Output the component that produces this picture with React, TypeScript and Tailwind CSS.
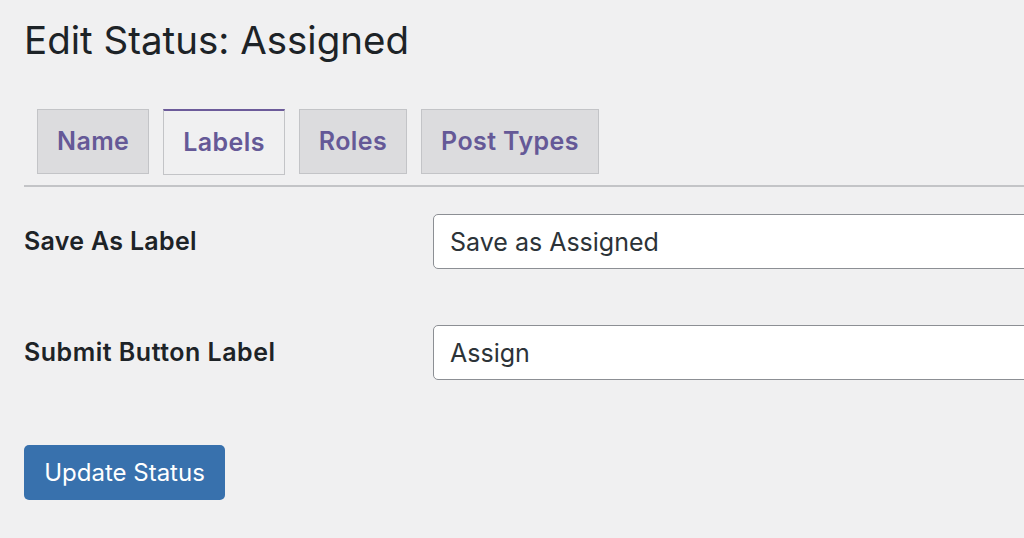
import React from 'react';

const tabs = ['Name', 'Labels', 'Roles', 'Post Types'];

export default function App() {
  const active = 'Labels';

  return (
    <div
      className="w-[1024px] h-[538px] overflow-hidden bg-[#f0f0f1] text-[#1d2327] pl-6"
      style={{ fontFamily: 'Inter, "Noto Sans", sans-serif' }}
    >
      {/* Title */}
      <h1 className="pt-[16px] text-[38.5px] leading-[48px] font-normal">Edit Status: Assigned</h1>

      {/* Tabs */}
      <div className="mt-[45px] border-b-2 border-[#c3c4c7] pb-[10px]">
        <div className="flex gap-[14px] pl-[13px]">
          {tabs.map((tab) =>
            tab === active ? (
              <div
                key={tab}
                className="h-[66px] px-[19px] flex items-center bg-[#f0f0f1] border border-[#c3c4c7] border-t-2 border-t-[#6c5b9a] text-[25px] tracking-[0.4px] font-semibold text-[#655997]"
              >
                {tab}
              </div>
            ) : (
              <div
                key={tab}
                className="h-[65px] px-[19px] flex items-center bg-[#dcdcde] border border-[#c3c4c7] text-[25px] tracking-[0.4px] font-semibold text-[#655997]"
              >
                {tab}
              </div>
            )
          )}
        </div>
      </div>

      {/* Form */}
      <div className="mt-[27px] flex flex-col gap-[56px]">
        <div className="flex items-center">
          <label className="w-[409px] text-[25px] tracking-[0.3px] font-semibold">Save As Label</label>
          <input
            readOnly
            value="Save as Assigned"
            className="flex-1 h-[55px] bg-white border border-[#8c8f94] rounded-[5px] px-4 text-[25px] text-[#2c3338] mr-[-10px]"
          />
        </div>
        <div className="flex items-center">
          <label className="w-[409px] text-[25px] tracking-[0.5px] font-semibold">Submit Button Label</label>
          <input
            readOnly
            value="Assign"
            className="flex-1 h-[55px] bg-white border border-[#8c8f94] rounded-[5px] px-4 text-[25px] text-[#2c3338] mr-[-10px]"
          />
        </div>
      </div>

      <button className="mt-[65px] h-[55px] w-[201px] rounded-[5px] bg-[#3871ad] text-white text-[24px]">
        Update Status
      </button>
    </div>
  );
}
